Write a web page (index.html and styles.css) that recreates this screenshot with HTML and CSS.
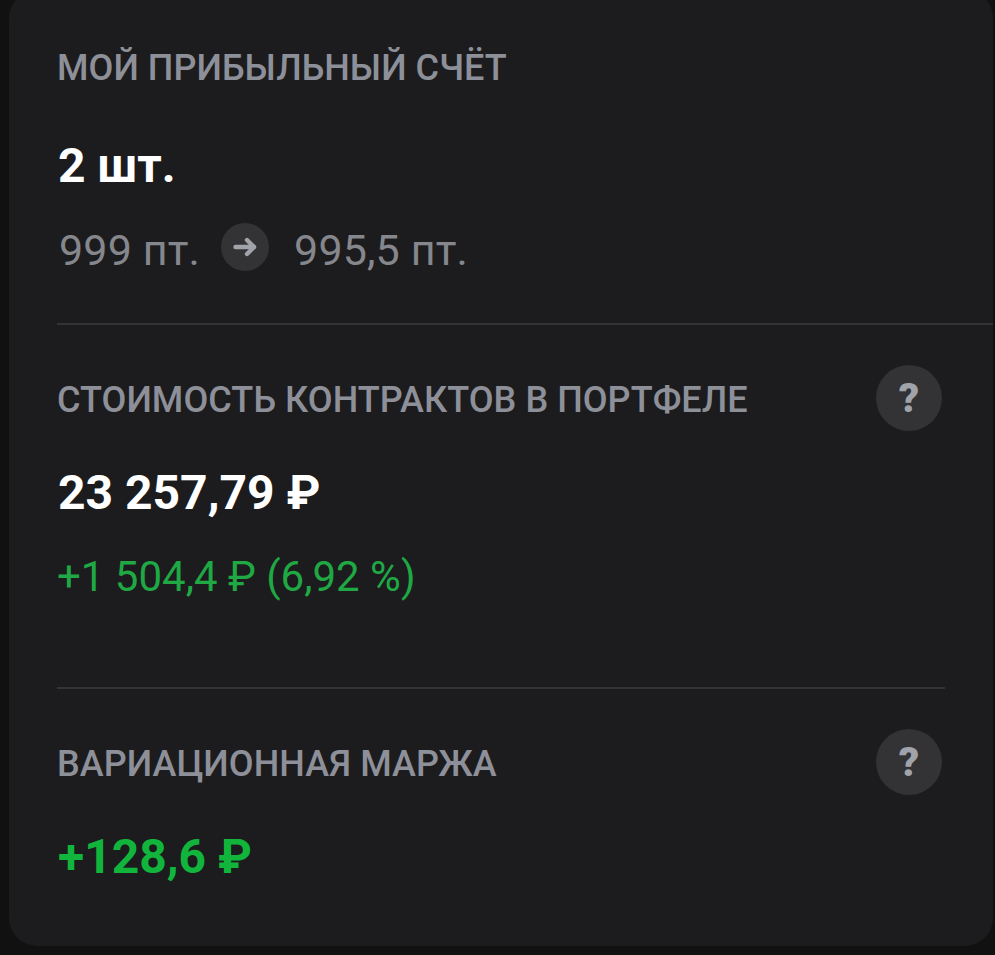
FILE: index.html
```html
<!DOCTYPE html>
<html lang="ru">
<head>
    <meta charset="UTF-8">
    <meta name="viewport" content="width=device-width, initial-scale=1.0">
    <title>Мой прибыльный счёт</title>
    <link rel="stylesheet" href="styles.css">
</head>
<body>
    <div class="card">
        <div class="section section-account">
            <div class="label">МОЙ ПРИБЫЛЬНЫЙ СЧЁТ</div>
            <div class="value value-count">2 шт.</div>
            <div class="prices">
                <span>999 пт.</span>
                <span class="arrow">
                    <svg width="26" height="26" viewBox="0 0 26 26" fill="none" stroke="#a1a3aa" stroke-width="4.4" stroke-linecap="round" stroke-linejoin="round">
                        <path d="M3.5 13H22"/>
                        <path d="M15 6L22 13L15 20"/>
                    </svg>
                </span>
                <span>995,5 пт.</span>
            </div>
        </div>

        <div class="section section-cost">
            <div class="label-row">
                <div class="label">СТОИМОСТЬ КОНТРАКТОВ В ПОРТФЕЛЕ</div>
                <div class="help">?</div>
            </div>
            <div class="value">23 257,79 ₽</div>
            <div class="change">+1 504,4 ₽ (6,92 %)</div>
        </div>

        <div class="section section-margin">
            <div class="label-row">
                <div class="label">ВАРИАЦИОННАЯ МАРЖА</div>
                <div class="help">?</div>
            </div>
            <div class="value value-green">+128,6 ₽</div>
        </div>
    </div>
</body>
</html>
```

FILE: styles.css
```css
html, body {
    margin: 0;
    height: 955px;
    overflow: hidden;
}
body {
    font-family: Roboto, "Noto Sans", sans-serif;
    background-color: #111112;
    color: #fff;
}
.card {
    box-sizing: border-box;
    height: 956px;
    margin: -10px 2px 0 9px;
    background-color: #1c1c1e;
    border-radius: 28px;
    padding-left: 48px;
}
.section-account {
    height: 335px;
    padding-top: 56px;
    box-sizing: border-box;
    border-bottom: 2px solid #333335;
}
.section-cost {
    height: 364px;
    margin-right: 48px;
    padding-top: 40px;
    box-sizing: border-box;
    border-bottom: 2px solid #333335;
}
.section-margin {
    margin-right: 48px;
    padding-top: 40px;
}
.label-row {
    display: flex;
    justify-content: space-between;
    align-items: center;
    margin-right: 3px;
}
.label-row .label {
    margin-top: 4px;
}
.label {
    font-size: 36px;
    line-height: 44px;
    font-weight: 500;
    letter-spacing: 0.05px;
    color: #8e9099;
}
.value {
    font-size: 48px;
    line-height: 52px;
    font-weight: 700;
    margin-top: 36px;
    padding-left: 1px;
}
.value-count {
    margin-top: 50px;
}
.value-green {
    color: #12b53c;
}
.prices {
    display: flex;
    align-items: center;
    font-size: 43px;
    letter-spacing: 0.15px;
    color: #85878d;
    margin-top: 31px;
    margin-left: 2px;
}
.arrow {
    width: 48px;
    height: 48px;
    border-radius: 50%;
    background-color: #333335;
    display: flex;
    align-items: center;
    justify-content: center;
    margin: 0 25px 6px 21px;
}
.change {
    font-size: 42px;
    line-height: 48px;
    color: #1fa844;
    margin-top: 34px;
}
.help {
    width: 66px;
    height: 66px;
    border-radius: 50%;
    background-color: #333335;
    color: #a1a3aa;
    font-size: 40px;
    font-weight: 900;
    display: flex;
    align-items: center;
    justify-content: center;
}
```
